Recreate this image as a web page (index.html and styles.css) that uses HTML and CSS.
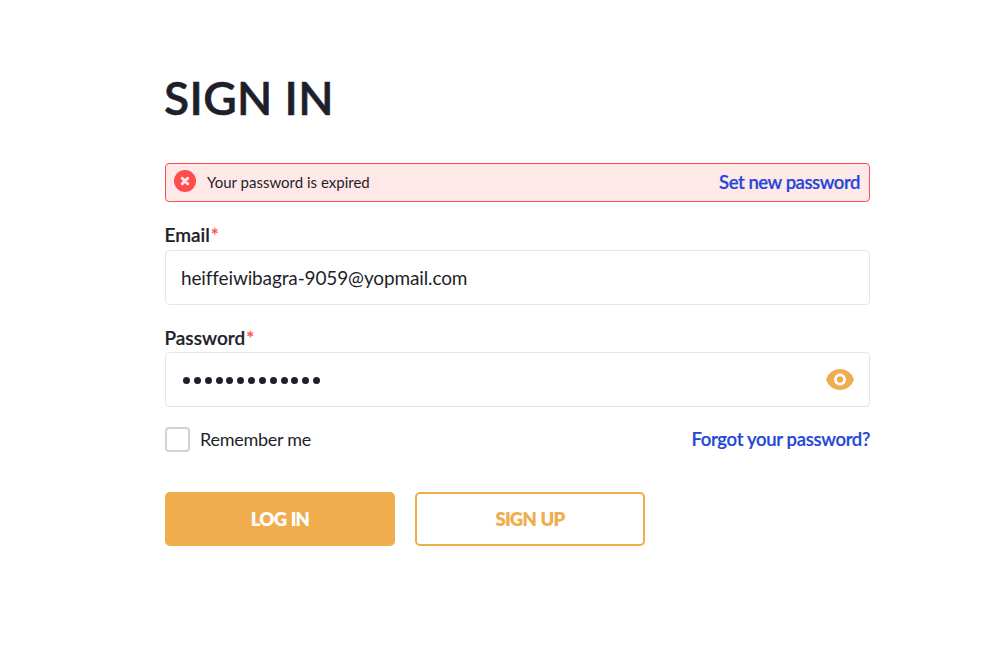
FILE: index.html
```html
<!DOCTYPE html>
<html lang="en">
<head>
<meta charset="utf-8">
<title>Sign in</title>
<link rel="stylesheet" href="styles.css">
</head>
<body>
<main class="signin">
  <h1 class="title">SIGN IN</h1>
  <div class="alert">
    <svg class="alert-icon" viewBox="0 0 22 22"><circle cx="11" cy="11" r="11" fill="#ff4d4d"/><path d="M8.300 8.300l5.400 5.400M13.700 8.300l-5.400 5.400" stroke="#ffe8e8" stroke-width="3" stroke-linecap="round"/></svg>
    <span class="alert-text">Your password is expired</span>
    <a class="link">Set new password</a>
  </div>
  <div class="label">Email<span class="req">*</span></div>
  <div class="field"><span class="value">heiffeiwibagra-9059@yopmail.com</span></div>
  <div class="label label-password">Password<span class="req">*</span></div>
  <div class="field">
    <span class="dots"><i></i><i></i><i></i><i></i><i></i><i></i><i></i><i></i><i></i><i></i><i></i><i></i><i></i></span>
    <svg class="eye" viewBox="0 0 28 21"><path fill="#f0ad4e" d="M14 0C7.800 0 2.400 4 0 10.500c2.400 6.500 7.800 10.500 14 10.500s11.600-4 14-10.500C25.600 4 20.200 0 14 0z"/><circle cx="14" cy="10.500" r="4.600" fill="none" stroke="#fff" stroke-width="2.800"/></svg>
  </div>
  <div class="options">
    <span class="checkbox"></span><span class="remember">Remember me</span>
    <a class="link link-forgot">Forgot your password?</a>
  </div>
  <div class="actions"><button class="btn primary">LOG IN</button><button class="btn outline">SIGN UP</button></div>
</main>
</body>
</html>
```
FILE: styles.css
```css
* { box-sizing: border-box; }
body { margin: 0; background: #fff; color: #1f1f2c; font-family: Lato, "Liberation Sans", sans-serif; font-size: 18px; }
.signin { width: 705px; margin: 0 0 0 165px; padding-top: 69px; }
.title { margin: 0 0 0 -1px; height: 94px; line-height: 58px; font-size: 46px; font-weight: 600; letter-spacing: .4px; -webkit-text-stroke: .6px #1f1f2c; }
.alert { display: flex; align-items: center; height: 39px; padding: 0 9px 0 8px; border: 1px solid #ff4d4d; border-radius: 4px; background: #ffe8e8; }
.alert-icon { width: 22px; height: 22px; margin: -3px 11px 0 0; }
.alert-text { font-size: 15px; margin-top: -2px; }
.link { margin: -1px 0 0 auto; color: #2348d8; font-size: 18.5px; font-weight: 600; letter-spacing: -.45px; -webkit-text-stroke: .2px #2348d8; }
.link-forgot { letter-spacing: -.33px; }
.label { margin: 20px 0 0 -.5px; height: 28px; line-height: 26px; font-size: 19px; font-weight: 600; -webkit-text-stroke: .2px #1f1f2c; }
.label-password { margin-top: 20px; height: 27px; }
.req { color: #ff4d4d; font-weight: 400; margin-left: 1px; -webkit-text-stroke: .3px #ff4d4d; }
.field { display: flex; align-items: center; height: 55px; padding: 0 15px; border: 1px solid #e6e6e9; border-radius: 4px; }
.value { font-size: 19px; letter-spacing: -.13px; }
.dots { display: flex; gap: 3.85px; padding: 1px 0 0 2px; }
.dots i { width: 7px; height: 7px; border-radius: 50%; background: #1f1f2c; }
.eye { width: 28px; height: 21px; margin-left: auto; }
.options { display: flex; align-items: center; height: 25px; margin-top: 20px; }
.checkbox { width: 25px; height: 25px; border: 2px solid #d1d3dc; border-radius: 4px; margin-right: 10px; }
.remember { letter-spacing: -.27px; margin-top: -2px; }
.actions { display: flex; gap: 20px; margin-top: 40px; }
.btn { width: 230px; height: 54px; padding: 0 0 1px; border: 2px solid #f0ad4e; border-radius: 5px; font: 800 18.500px Lato, sans-serif; letter-spacing: -.8px; word-spacing: 1px; }
.primary { background: #f0ad4e; color: #fff; }
.outline { background: #fff; color: #f0ad4e; }
```
